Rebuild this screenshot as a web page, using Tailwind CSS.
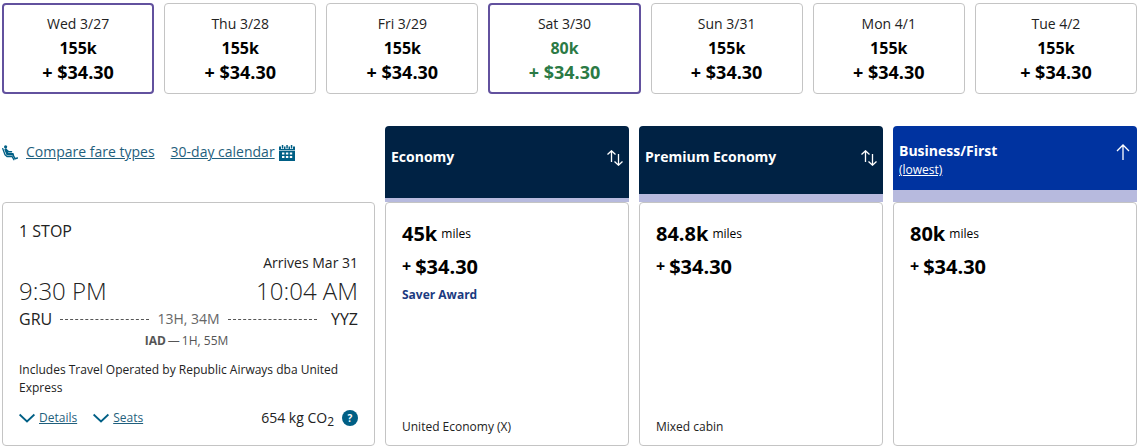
<!DOCTYPE html>
<html lang="en">
 <head>
  <meta charset="utf-8"/>
  <meta content="width=device-width, initial-scale=1.0" name="viewport"/>
  <title>Flight results</title>
  <script src="https://cdn.jsdelivr.net/npm/@tailwindcss/browser@4"></script>
 </head>
 <body class="bg-white text-black font-['Open_Sans',sans-serif] pt-[3px] px-[2px]">
  <!-- Date strip -->
  <nav aria-label="Travel dates" class="grid grid-cols-7">
   <button class="mr-[10px] rounded border-2 border-[#62519e] pt-[7px] pb-2 text-center">
    <span class="block text-sm leading-6 text-[#222]">Wed 3/27</span>
    <span class="block text-base leading-6 font-bold">155k</span>
    <span class="block text-lg leading-6 font-bold">+ $34.30</span>
   </button>
   <button class="mr-[10px] rounded border border-[#c4c4c4] pt-2 pb-[9px] text-center">
    <span class="block text-sm leading-6 text-[#222]">Thu 3/28</span>
    <span class="block text-base leading-6 font-bold">155k</span>
    <span class="block text-lg leading-6 font-bold">+ $34.30</span>
   </button>
   <button class="mr-[10px] rounded border border-[#c4c4c4] pt-2 pb-[9px] text-center">
    <span class="block text-sm leading-6 text-[#222]">Fri 3/29</span>
    <span class="block text-base leading-6 font-bold">155k</span>
    <span class="block text-lg leading-6 font-bold">+ $34.30</span>
   </button>
   <button class="mr-[10px] rounded border-2 border-[#62519e] pt-[7px] pb-2 text-center">
    <span class="block text-sm leading-6 text-[#222]">Sat 3/30</span>
    <span class="block text-base leading-6 font-bold text-[#2b7a45]">80k</span>
    <span class="block text-lg leading-6 font-bold text-[#2b7a45]">+ $34.30</span>
   </button>
   <button class="mr-[10px] rounded border border-[#c4c4c4] pt-2 pb-[9px] text-center">
    <span class="block text-sm leading-6 text-[#222]">Sun 3/31</span>
    <span class="block text-base leading-6 font-bold">155k</span>
    <span class="block text-lg leading-6 font-bold">+ $34.30</span>
   </button>
   <button class="mr-[10px] rounded border border-[#c4c4c4] pt-2 pb-[9px] text-center">
    <span class="block text-sm leading-6 text-[#222]">Mon 4/1</span>
    <span class="block text-base leading-6 font-bold">155k</span>
    <span class="block text-lg leading-6 font-bold">+ $34.30</span>
   </button>
   <button class="rounded border border-[#c4c4c4] pt-2 pb-[9px] text-center">
    <span class="block text-sm leading-6 text-[#222]">Tue 4/2</span>
    <span class="block text-base leading-6 font-bold">155k</span>
    <span class="block text-lg leading-6 font-bold">+ $34.30</span>
   </button>
  </nav>

  <main class="mt-8">
   <!-- Column headings -->
   <div class="grid grid-cols-[373fr_244fr_244fr_244fr] gap-x-[10px] h-[76px]">
    <div class="flex items-start pt-4 text-sm leading-5 text-[#1f5f7d]">
     <svg aria-hidden="true" class="mt-[3px] size-4" fill="none" viewBox="0 0 16 16">
      <circle cx="3.600" cy="1.800" fill="#005f85" r="1.600"/>
      <path d="M.7 3.600l2.300 6.200 2 1.800h5.200l1.700 3.200" stroke="#005f85" stroke-linecap="round" stroke-linejoin="round" stroke-width="1.300"/>
      <path d="M3.700 4.600L5.600 9.300h5" stroke="#005f85" stroke-linecap="round" stroke-linejoin="round" stroke-width="2.600"/>
      <path d="M10.800 9.200l2.200 4.600 2.400-.8M5 5.200l1.800 1.600h2.700" stroke="#005f85" stroke-linecap="round" stroke-linejoin="round" stroke-width="1.500"/>
     </svg>
     <a class="ml-2 underline" href="#">Compare fare types</a>
     <a class="ml-4 underline" href="#">30-day calendar</a>
     <svg aria-hidden="true" class="ml-1 mt-[3px] size-4" viewBox="0 0 16 16">
      <path d="M0 1.500h2v2.500h3V1.500h1.500v2.500h3V1.500H11v2.500h3V1.500h2v3.700H0zM2.800 0h1.500v3.400H2.800zM7.300 0h1.500v3.400H7.300zM11.800 0h1.500v3.400h-1.500z" fill="#005f85"/>
      <path d="M0 5.800h16V16H0z" fill="#005f85"/>
      <path d="M3 7.500h2.400v2H3zM6.900 7.500h2.400v2H6.900zM10.800 7.500h2.400v2h-2.400zM3 11h2.400v2H3zM6.900 11h2.400v2H6.900zM10.800 11h2.400v2h-2.400z" fill="#fff"/>
     </svg>
    </div>
    <div class="flex items-start justify-between rounded-t border-b-4 border-[#b7bade] bg-[#002244] px-[6px] pt-[21px] text-sm leading-5 text-white">
     <h2 class="font-bold">Economy</h2>
     <button aria-label="Sort by Economy" class="mt-[3px]">
      <svg class="size-4" fill="none" stroke="currentColor" stroke-width="1.300" viewBox="0 0 16 16"><path d="M.5 4.500L4.500.8l4 3.700M4.500 1v11M7.500 11.500l4 3.700 4-3.700M11.500 15V4"/></svg>
     </button>
    </div>
    <div class="flex items-start justify-between rounded-t border-b-8 border-[#b7bade] bg-[#002244] px-[6px] pt-[21px] text-sm leading-5 text-white">
     <h2 class="font-bold">Premium Economy</h2>
     <button aria-label="Sort by Premium Economy" class="mt-[3px]">
      <svg class="size-4" fill="none" stroke="currentColor" stroke-width="1.300" viewBox="0 0 16 16"><path d="M.5 4.500L4.500.8l4 3.700M4.500 1v11M7.500 11.500l4 3.700 4-3.700M11.500 15V4"/></svg>
     </button>
    </div>
    <div class="flex items-start justify-between rounded-t border-b-12 border-[#b7bade] bg-[#0033a0] px-[6px] pt-[15px] text-sm leading-5 text-white">
     <div>
      <h2 class="font-bold">Business/First</h2>
      <a class="block text-xs leading-[18px] underline" href="#">(lowest)</a>
     </div>
     <button aria-label="Sort by Business/First" class="mt-[3px]">
      <svg class="size-4" fill="none" stroke="currentColor" stroke-width="1.300" viewBox="0 0 16 16"><path d="M2 7l6-6 6 6M8 1v15"/></svg>
     </button>
    </div>
   </div>

   <!-- Flight row -->
   <div class="grid grid-cols-[373fr_244fr_244fr_244fr] gap-x-[10px]">
    <section class="rounded border border-[#c4c4c4] px-4 pt-[18px] pb-[17px] text-[#222]">
     <p class="text-base leading-5">1 STOP</p>
     <p class="mt-3 text-right text-sm leading-5">Arrives Mar 31</p>
     <div class="flex justify-between text-2xl font-light leading-9">
      <span>9:30 PM</span>
      <span>10:04 AM</span>
     </div>
     <div class="flex items-center text-base leading-5">
      <span>GRU</span>
      <span class="mx-2 flex-1 border-t border-dashed border-[#555]"></span>
      <span class="text-sm leading-5 text-[#666]">13H, 34M</span>
      <span class="ml-2 mr-[14px] flex-1 border-t border-dashed border-[#555]"></span>
      <span>YYZ</span>
     </div>
     <p class="mt-[3px] flex justify-center gap-[2px] pr-1 text-xs leading-[18px] text-[#555]"><strong>IAD</strong><span>—</span><span>1H, 55M</span></p>
     <p class="mt-[11px] text-xs leading-[18px]">Includes Travel Operated by Republic Airways dba United Express</p>
     <div class="mt-[11px] flex h-5 items-center text-xs leading-5">
      <button class="flex items-center gap-1 text-[#1f5f7d]">
       <svg class="size-4" fill="none" stroke="#005f85" stroke-width="1.800" viewBox="0 0 16 16"><path d="M.6 4.500L8 11.500l7.400-7"/></svg>
       <span class="underline">Details</span>
      </button>
      <button class="ml-4 flex items-center gap-1 text-[#1f5f7d]">
       <svg class="size-4" fill="none" stroke="#005f85" stroke-width="1.800" viewBox="0 0 16 16"><path d="M.6 4.500L8 11.500l7.400-7"/></svg>
       <span class="underline">Seats</span>
      </button>
      <span class="ml-auto text-sm leading-5">654 kg CO<sub class="text-xs leading-none">2</sub></span>
      <button aria-label="About carbon emissions" class="ml-2 size-4 rounded-full bg-[#005f85] text-[10px] leading-4 font-bold text-white">?</button>
     </div>
    </section>
    <section class="flex flex-col rounded border border-[#c4c4c4] px-4 pt-[18px] pb-[9px]">
     <p class="flex gap-1 text-xs leading-[26px]"><strong class="text-xl leading-[26px] font-bold">45k</strong><span>miles</span></p>
     <p class="mt-[7px] flex gap-1 text-xl leading-[26px] font-bold"><span class="text-base leading-6">+</span><span>$34.30</span></p>
     <p class="mt-[6px] text-xs leading-[18px] font-bold text-[#1b3a80]">Saver Award</p>
     <p class="mt-auto text-xs leading-[18px] text-[#222]">United Economy (X)</p>
    </section>
    <section class="flex flex-col rounded border border-[#c4c4c4] px-4 pt-[18px] pb-[9px]">
     <p class="flex gap-1 text-xs leading-[26px]"><strong class="text-xl leading-[26px] font-bold">84.8k</strong><span>miles</span></p>
     <p class="mt-[7px] flex gap-1 text-xl leading-[26px] font-bold"><span class="text-base leading-6">+</span><span>$34.30</span></p>
     <p class="mt-auto text-xs leading-[18px] text-[#222]">Mixed cabin</p>
    </section>
    <section class="flex flex-col rounded border border-[#c4c4c4] px-4 pt-[18px] pb-[9px]">
     <p class="flex gap-1 text-xs leading-[26px]"><strong class="text-xl leading-[26px] font-bold">80k</strong><span>miles</span></p>
     <p class="mt-[7px] flex gap-1 text-xl leading-[26px] font-bold"><span class="text-base leading-6">+</span><span>$34.30</span></p>
    </section>
   </div>
  </main>
 </body>
</html>
